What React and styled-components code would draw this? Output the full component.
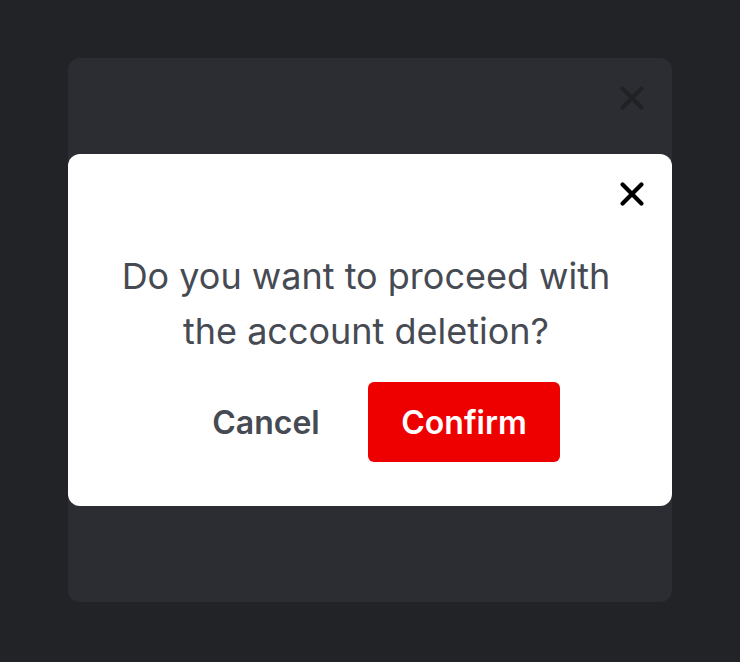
import React from "react";
import styled, { createGlobalStyle } from "styled-components";

const GlobalStyle = createGlobalStyle`
  html, body {
    margin: 0;
    padding: 0;
    background: #212327;
  }
  body {
    font-family: Inter, "Noto Sans", "Liberation Sans", sans-serif;
  }
`;

const Screen = styled.div`
  width: 740px;
  height: 660px;
  display: grid;
  place-items: center;
  background: #212327;
`;

const Panel = styled.div`
  grid-area: 1 / 1;
  width: 604px;
  height: ${(p) => p.$height}px;
  box-sizing: border-box;
  border-radius: 12px;
  background: ${(p) => p.$bg};
  display: flex;
  flex-direction: column;
  align-items: center;
  padding: 22px 22px 0;
`;

const CloseButton = styled.button`
  align-self: flex-end;
  width: 36px;
  height: 36px;
  padding: 6px;
  border: none;
  background: transparent;
  color: ${(p) => p.$color};
  display: flex;
  align-items: center;
  justify-content: center;
  cursor: pointer;
  box-sizing: border-box;
`;

const Message = styled.p`
  margin: 37px 0 0 -8px;
  font-size: 36px;
  line-height: 55px;
  text-align: center;
  color: #464a53;
  font-weight: 400;
`;

const Actions = styled.div`
  display: flex;
  align-items: center;
  gap: 16px;
  margin-top: 23px;
`;

const Button = styled.button`
  width: ${(p) => (p.$primary ? 192 : 172)}px;
  height: 80px;
  padding: 0;
  border: none;
  border-radius: 6px;
  font-family: inherit;
  font-size: 32px;
  font-weight: 600;
  cursor: pointer;
  background: ${(p) => (p.$primary ? "#ee0000" : "transparent")};
  color: ${(p) => (p.$primary ? "#ffffff" : "#464a53")};
`;

const CloseIcon = () => (
  <svg width="24" height="24" viewBox="0 0 24 24" fill="none">
    <path
      d="M2.6 2.6L21.4 21.4M21.4 2.6L2.6 21.4"
      stroke="currentColor"
      strokeWidth="4.2"
      strokeLinecap="round"
    />
  </svg>
);

export default function App() {
  return (
    <>
      <GlobalStyle />
      <Screen>
        <Panel $height={544} $bg="#2b2d32">
          <CloseButton $color="#202226" aria-label="Close">
            <CloseIcon />
          </CloseButton>
        </Panel>
        <Panel $height={352} $bg="#ffffff">
          <CloseButton $color="#000000" aria-label="Close">
            <CloseIcon />
          </CloseButton>
          <Message>
            Do you want to proceed with
            <br />
            the account deletion?
          </Message>
          <Actions>
            <Button>Cancel</Button>
            <Button $primary>Confirm</Button>
          </Actions>
        </Panel>
      </Screen>
    </>
  );
}
